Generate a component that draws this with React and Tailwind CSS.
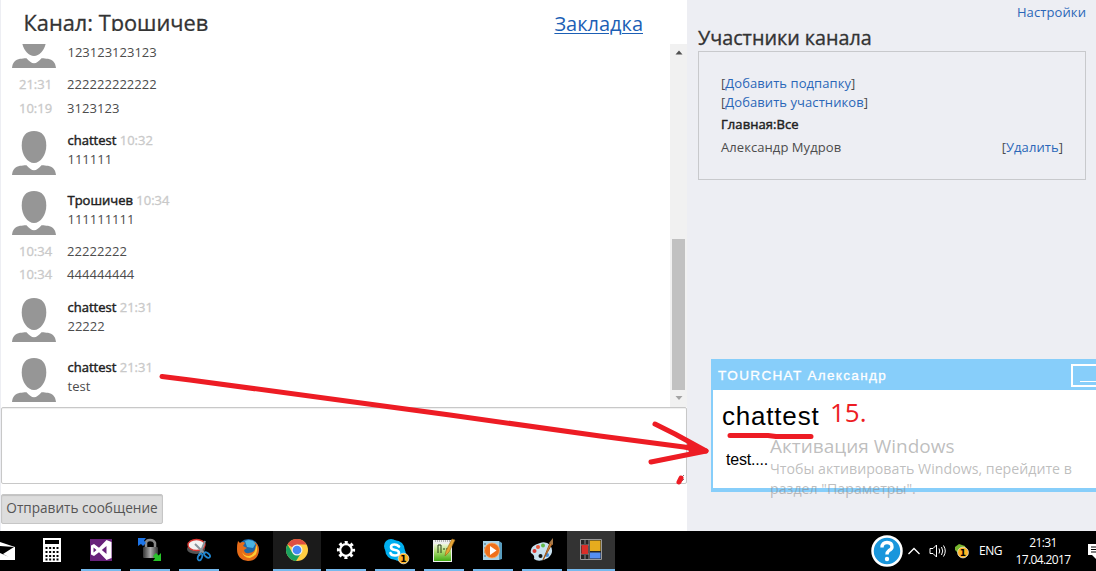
const stroke = '[-webkit-text-stroke:0.45px_currentColor]'

function Avatar() {
  return (
    <svg className="h-[44px] w-[44px] shrink-0" viewBox="0 0 44 44" fill="#969696">
      <path d="M22 0C30 0 34.3 5 34.3 14.5 34.3 24 28.500 32 22 32S9.700 24 9.700 14.500C9.700 5 14 0 22 0Z" />
      <path d="M0 44C.7 38 3.500 35.800 8 34.800 11 34.200 13.500 34 14.500 34.200 17 37 19.500 39.300 22 39.300S27 37 29.500 34.200C30.500 34 33 34.200 36 34.800 40.500 35.800 43.300 38 44 44Z" />
    </svg>
  )
}

function Message({ name, time, text, className = '' }) {
  return (
    <div className={`flex h-[44px] shrink-0 gap-[11.5px] pl-[11px] ${className}`}>
      <Avatar />
      <div className="leading-[19px]">
        {name && (
          <div className="text-[#c9c9c9]">
            <span className={`text-[#222] ${stroke}`}>{name}</span>{' '}
            <span className="[-webkit-text-stroke:0.3px_currentColor]">{time}</span>
          </div>
        )}
        <div className={name ? '' : 'pt-[19px]'}>{text}</div>
      </div>
    </div>
  )
}

function Line({ time, text, className = '' }) {
  return (
    <div className={`flex h-[24px] shrink-0 items-center pl-[18px] ${className}`}>
      <span className="w-[48px] text-[#c9c9c9] [-webkit-text-stroke:0.3px_currentColor]">{time}</span>
      <span className="tracking-[0.05px]">{text}</span>
    </div>
  )
}

function Chat() {
  return (
    <main className="ml-px flex w-[686px] flex-col bg-white">
      <header className="flex h-[44px] items-start justify-between pr-[44px] pl-[22.5px]">
        <h1 className={`h-[31px] overflow-hidden pt-[8px] text-[21.8px] leading-[30px] text-[#333] [-webkit-text-stroke:0.3px_currentColor]`}>
          Канал: Трошичев
        </h1>
        <a className="mt-[10px] text-[20px] leading-[28px] text-[#1c5fb5] underline decoration-1 underline-offset-[2px]">Закладка</a>
      </header>
      <section className="flex h-[363px] overflow-hidden">
        <div className="flex grow flex-col text-[13px] text-[#4c4c4c]">
          <Message text="123123123123" className="-mt-[20px]" />
          <Line time="21:31" text="222222222222" className="mt-[5px]" />
          <Line time="10:19" text="3123123" />
          <Message name="chattest" time="10:32" text="111111" className="mt-[10px]" />
          <Message name="Трошичев" time="10:34" text="111111111" className="mt-[16px]" />
          <Line time="10:34" text="22222222" className="mt-[5px]" />
          <Line time="10:34" text="444444444" className="-mt-px" />
          <Message name="chattest" time="21:31" text="22222" className="mt-[11px]" />
          <Message name="chattest" time="21:31" text="test" className="mt-[16px]" />
        </div>
        <div className="flex w-[17px] flex-col items-center bg-[#f1f1f1]">
          <svg className="mt-[6px] h-[5px] w-[8px]" viewBox="0 0 8 5"><path d="M0.500 4.500 4 .5 7.500 4.500Z" fill="#505050" /></svg>
          <div className="mt-[184px] h-[151px] w-[13px] bg-[#c1c1c1]" />
          <svg className="mt-[6px] h-[4px] w-[8px]" viewBox="0 0 8 4"><path d="M0.500 0H7.500L4 4Z" fill="#a3a3a3" /></svg>
        </div>
      </section>
      <div className="flex h-[77px] items-end justify-end rounded-[2px] border border-[#c8c8c8] bg-white p-px shadow-[inset_0_1px_1px_#0001]">
        <svg className="h-[8px] w-[8px]" viewBox="0 0 8 8"><path d="M1 7 7 1M5 7 7 5" stroke="#777" fill="none" /></svg>
      </div>
      <button className="mt-[10px] h-[30px] w-[162px] rounded-[2px] border border-[#c6c6c6] bg-[#ddd] pb-[2px] text-[13.6px] whitespace-nowrap text-[#555] shadow-[inset_0_1px_1px_#0002]">
        Отправить сообщение
      </button>
    </main>
  )
}

function Members() {
  return (
    <aside className="grow pt-[3px] pr-[10px] pl-[11px] text-[13px] leading-[19px] text-[#4c4c4c]">
      <div className="text-right tracking-[0.1px] text-[#2a66b8]">Настройки</div>
      <h2 className="mt-[2px] text-[19.75px] leading-[27px] text-[#333] [-webkit-text-stroke:0.35px_currentColor]">Участники канала</h2>
      <div className="h-[129px] w-[388px] border border-[#c8c9cc] px-[22px] pt-[22px] tracking-[0.07px]">
        <div>[<a className="text-[#2a66b8]">Добавить подпапку</a>]</div>
        <div>[<a className="text-[#2a66b8]">Добавить участников</a>]</div>
        <div className={`mt-[3px] text-[#222] ${stroke}`}>Главная:Все</div>
        <div className="mt-[4px] flex justify-between">
          <span>Александр Мудров</span>
          <span>[<a className="text-[#2a66b8]">Удалить</a>]</span>
        </div>
      </div>
    </aside>
  )
}

function Toast() {
  return (
    <div className="absolute top-[359px] left-[711px] flex h-[133px] w-[385px] flex-col overflow-hidden border-b-[4px] border-l-[2px] border-[#87cefa] bg-white font-['Liberation_Sans',sans-serif]">
      <div className="flex h-[31px] items-center justify-between bg-[#87cefa] pl-[5px] text-white">
        <span className="pt-[3px] text-[13.5px] tracking-[1.35px] [-webkit-text-stroke:0.3px_currentColor]">TOURCHAT Александр</span>
        <span className="mt-[2px] flex h-[23px] w-[25px] items-end border-2 border-r-0 border-white pb-[3px] pl-[7px]">
          <span className="h-px w-full bg-white" />
        </span>
      </div>
      <div className="pt-[11px] pl-[9px] text-[26px] leading-[30px] tracking-[0.8px] text-black">chattest</div>
      <div className="mt-[18px] pl-[13px] text-[16px] leading-[22px] tracking-[-0.2px] text-black">test....</div>
    </div>
  )
}

function Watermark() {
  return (
    <div className="absolute top-[434px] left-[770px] whitespace-nowrap text-[#8888888c]">
      <div className="text-[19px] leading-[25px]">Активация Windows</div>
      <div className="text-[14.2px] leading-[20px]">Чтобы активировать Windows, перейдите в</div>
      <div className="text-[14.2px] leading-[20px]">раздел "Параметры".</div>
    </div>
  )
}

function Annotations() {
  return (
    <>
      <svg className="absolute top-0 left-0 h-[571px] w-[1096px]" viewBox="0 0 1096 571" fill="none" stroke="#ed1c24" strokeWidth="5" strokeLinecap="round" strokeLinejoin="round">
        <path d="M162 376.500 190 380 350 401.500 450 415 600 436 684 447 706 451" />
        <path d="M655 424 675 434 706 451 651 462" />
        <path d="M688 444 704 451 690 452Z" fill="#ed1c24" strokeWidth="2" />
        <path d="M730 435.500H768L776 436.500H811" />
        <path d="M681 478 679 482" />
      </svg>
      <div className="absolute top-[394px] left-[830px] font-['Open_Sans','Noto_Sans',sans-serif] text-[26px] leading-[36px] text-[#ed1c24]">15.</div>
    </>
  )
}

const svg = { className: 'block', width: 24, height: 24, viewBox: '0 0 24 24' }

const Calc = () => (
  <svg {...svg}><path d="M3 0H21V24H3Z" fill="#fff" /><path d="M5 2H19V6H5Z" />
    <path d="M5.500 10H18.500M5.500 14H18.500M5.500 18H18.500M5.500 21.500H18.500" stroke="#000" strokeWidth="2" strokeDasharray="2 1.670" /></svg>
)
const VisualStudio = () => (
  <svg {...svg}><path d="M1 1H23V23H1Z" fill="#68217a" /><path d="M2 7.500 5 6 10 9.800 17.500 2 22.500 4V20L17.500 22 10 14.200 5 18 2 16.500ZM4.500 9.500V14.500L7.500 12ZM17.500 8 12.800 12 17.500 16Z" fill="#fff" fillRule="evenodd" /></svg>
)
const Lock = () => (
  <svg {...svg}><defs><linearGradient id="lk"><stop stopColor="#333" /><stop offset=".5" stopColor="#aaa" /><stop offset="1" stopColor="#333" /></linearGradient></defs>
    <path d="M8 11V5Q8 2 12 2T17 5V11" fill="none" stroke="#888" strokeWidth="2.500" /><rect x="5" y="9" width="15" height="11" rx="1" fill="url(#lk)" />
    <path d="M0 0H8L6 2.500 8 5 5 8 3 6 0 8Z" fill="#1d75e8" /><path d="M23 23H15L17 20.500 15 18 18 15 20.500 17.500 23 15Z" fill="#27c228" /></svg>
)
const Scissors = () => (
  <svg {...svg}><ellipse cx="9" cy="11" rx="9" ry="5" fill="#555" /><ellipse cx="9.500" cy="7" rx="8.500" ry="5.500" fill="#f3f3f3" stroke="#db3530" strokeWidth="1.300" />
    <path d="M8 6 18 16M18 3 12 18" stroke="#89949d" strokeWidth="2" /><ellipse cx="13" cy="19" rx="2" ry="3.500" transform="rotate(20 13 19)" fill="none" stroke="#2086cf" strokeWidth="1.800" /><ellipse cx="20" cy="17" rx="2" ry="3.500" transform="rotate(-50 20 17)" fill="none" stroke="#2086cf" strokeWidth="1.800" /></svg>
)
const Firefox = () => (
  <svg {...svg}><circle cx="12.500" cy="11.500" r="10.500" fill="#1d67a8" /><path d="M9 3Q15 0 20 5L17 10 11 9Z" fill="#4ab3e3" />
    <path d="M2 3 4 5Q7 3 9 5L7 8 11 10 8 12Q9 16 13 15 20 14 20 7L18 4Q23 6 23 12 22 23 12 23 1 22 1 11 1 6 2 3Z" fill="#e66c18" /><path d="M20 7Q20 16 13 18 7 18 6 13 7 20 14 20 22 18 21 9Z" fill="#ffcb32" /></svg>
)
const Chrome = () => (
  <svg {...svg}><circle cx="12" cy="12" r="11" fill="#ffcd42" /><path d="M12 12 2.470 6.500A11 11 0 0 1 21.530 6.500H12Z" fill="#de4f40" /><path d="M2.470 6.500A11 11 0 0 0 11 23L16.500 14.500 12 12 7 14Z" fill="#1aa15f" />
    <circle cx="12" cy="12" r="5.500" fill="#f1f1f1" /><circle cx="12" cy="12" r="4.300" fill="#4487f4" /></svg>
)
const Gear = () => (
  <svg {...svg} fill="none" stroke="#fff"><circle cx="12" cy="12" r="5.800" strokeWidth="2.200" /><circle cx="12" cy="12" r="7.600" strokeWidth="3" strokeDasharray="3 2.970" strokeDashoffset="1.500" /></svg>
)
const Badge = ({ x, y, r = 5.5 }) => (
  <><circle cx={x} cy={y} r={r} fill="#ffb322" stroke="#e4e4d9" strokeWidth=".8" /><text x={x} y={y + 3.5} textAnchor="middle" fontFamily="DejaVu Sans" fontSize="9" fontWeight="bold">1</text></>
)
const Skype = () => (
  <svg className="shrink-0" width="27" height="27" viewBox="0 0 27 27"><circle cx="8" cy="8" r="7" fill="#00aff0" /><circle cx="12" cy="12" r="9.800" fill="#00aff0" /><circle cx="16" cy="16" r="7" fill="#00aff0" />
    <path d="M16 8.500Q14 6.500 11.500 6.500 8 6.500 8 9T12 12 16 15 12 17.500 7.500 15" fill="none" stroke="#fff" strokeWidth="2.600" strokeLinecap="round" /><Badge x={20.5} y={20.5} r={5.3} /></svg>
)
const Notepad = () => (
  <svg {...svg}><defs><linearGradient id="np" x2="0" y2="1"><stop stopColor="#eef7dc" /><stop offset=".4" stopColor="#b5e078" /><stop offset="1" stopColor="#42ab13" /></linearGradient></defs>
    <path d="M1 2H20V24H1Z" fill="#eee" /><path d="M2 6H19V23H2Z" fill="url(#np)" /><path d="M3 3H18" stroke="#777" strokeDasharray="1 1" /><path d="M6 15V7H9V15M11 11H13M14 11H16" stroke="#263b14" fill="none" /><path d="M13 18 14 13 20 1 23 2 17 14Z" fill="#e7a535" stroke="#976519" strokeWidth=".6" /></svg>
)
const Media = () => (
  <svg {...svg}><path d="M3 3H18L21 5V21L18 22H5Z" fill="#599dbf" /><path d="M2 3H18V22H2Z" fill="#a9d3e8" /><path d="M3 6H5M3 10H5M3 14H5M3 18H5" stroke="#496c7d" /><circle cx="11" cy="12.500" r="7.500" fill="#ef701b" stroke="#fcae66" strokeWidth=".8" /><path d="M9 8 15.500 12.500 9 17Z" fill="#fff" /></svg>
)
const Paint = () => (
  <svg {...svg}><path d="M10 5Q16 3 20 7 25 14 18 20 9 25 4 21 5 17 1 15-1 8 10 5Z" fill="#c7e0ef" /><circle cx="4.500" cy="13" r="2" fill="#d93a35" /><circle cx="8" cy="9" r="2" fill="#e8563a" /><circle cx="13" cy="7.500" r="2" fill="#61ba48" /><circle cx="10.500" cy="18" r="2" fill="#111" /><circle cx="17" cy="17" r="2" fill="#438bd7" /><path d="M13 22 20 5 22 6Z" fill="#d68736" stroke="#9e581d" /><path d="M19 5 23 0 23 7Z" fill="#a97947" /></svg>
)
const Forms = () => (
  <svg width="22" height="22" viewBox="0 0 22 22"><path d="M.5.500H21.500V20.500H.5Z" fill="#242424" stroke="#999" /><path d="M9 1V20M1 6H9M1 15H9M5 1V5M5 16V20" stroke="#888" /><path d="M1.500 6H8V15H1.500Z" fill="#d92e28" /><path d="M10 1.500H20.500V12H10Z" fill="#e5ac1e" /><path d="M10 13.500H20.500V19.500H10Z" fill="#568ff0" /></svg>
)

const apps = [
  { Icon: Calc, cell: 'ml-[16px] w-[40px]' },
  { Icon: VisualStudio, cell: 'ml-[9px] w-[40px] border-[#76b9ed]' },
  { Icon: Lock, cell: 'ml-[9px] w-[40px] border-[#76b9ed]' },
  { Icon: Scissors, cell: 'ml-[9px] w-[40px] border-[#76b9ed]' },
  { Icon: Firefox, cell: 'ml-[9px] w-[40px]' },
  { Icon: Chrome, cell: 'ml-[5px] w-[48px] bg-[#1b1b1b] border-[#76b9ed]' },
  { Icon: Gear, cell: 'ml-[5px] w-[40px] border-[#76b9ed]' },
  { Icon: Skype, cell: 'ml-[9px] w-[40px] pt-[3px] pl-[2px] border-[#76b9ed]' },
  { Icon: Notepad, cell: 'ml-[9px] w-[40px] border-[#76b9ed]' },
  { Icon: Media, cell: 'ml-[9px] w-[40px] border-[#76b9ed]' },
  { Icon: Paint, cell: 'ml-[9px] w-[40px] border-[#76b9ed]' },
  { Icon: Forms, cell: 'ml-[5px] w-[48px] bg-[#333] border-[#76b9ed]' },
]

function Taskbar() {
  return (
    <footer className="flex h-[40px] overflow-hidden bg-black text-white">
      <svg className="mt-[10px] h-[20px] w-[16px] shrink-0" viewBox="0 0 16 20"><path d="M0 1 15 6V19H0Z" fill="#fff" /><path d="M0 5 14 6 3 13 9 16 0 12Z" fill="#000" /></svg>
      {apps.map(({ Icon, cell }, i) => (
        <div key={i} className={`flex shrink-0 items-center justify-center border-b-2 border-solid ${cell.includes('border-[') ? '' : 'border-transparent'} ${cell}`}>
          <Icon />
        </div>
      ))}
      <div className="ml-auto flex items-center text-[12px]">
        <svg width="32" height="32" viewBox="0 0 32 32"><circle cx="16" cy="16" r="14.500" fill="#1996dc" stroke="#fff" strokeWidth="2.500" /><path d="M11 12.500Q11 7.500 16 7.500T21 12Q21 14 18 15.500 16 17 16 19.500" fill="none" stroke="#fff" strokeWidth="3.400" /><circle cx="16" cy="24" r="2.200" fill="#fff" /></svg>
        <svg className="ml-[4px]" width="14" height="10" viewBox="0 0 14 10"><path d="M1.500 8 7 2.500 12.500 8" fill="none" stroke="#fff" strokeWidth="1.300" /></svg>
        <svg className="ml-[8px]" width="18" height="16" viewBox="0 0 18 16" fill="none" stroke="#fff"><path d="M1 5.500H4L7.500 2V14L4 10.500H1Z" /><path d="M10 5.500Q11.500 8 10 10.500M12.500 4Q15 8 12.500 12M14.500 2.500Q18 8 14.500 13.500" /></svg>
        <svg className="ml-[7px]" width="16" height="16" viewBox="0 0 16 16"><path d="M1 4 5 1 11 3 12 8 5 11 1 7Z" fill="#76b52d" /><Badge x={9} y={9.5} r={5.4} /></svg>
        <span className="ml-[9px] tracking-[-0.500px]">ENG</span>
        <div className="ml-[12px] w-[58px] text-center leading-[17px] tracking-[-0.600px] whitespace-nowrap"><div>21:31</div><div>17.04.2017</div></div>
        <svg className="ml-[16px]" width="8" height="18" viewBox="0 0 8 18"><path d="M0 2H8V17L4 13H0Z" fill="#fff" /><path d="M3 5H8M3 7.500H8M3 10H8" stroke="#000" /></svg>
      </div>
    </footer>
  )
}

export default function App() {
  return (
    <div className="relative h-[571px] w-[1096px] overflow-hidden bg-[#edeef3] font-['Open_Sans','Noto_Sans',sans-serif]">
      <div className="flex h-[531px]">
        <Chat />
        <Members />
      </div>
      <Taskbar />
      <Toast />
      <Watermark />
      <Annotations />
    </div>
  )
}
